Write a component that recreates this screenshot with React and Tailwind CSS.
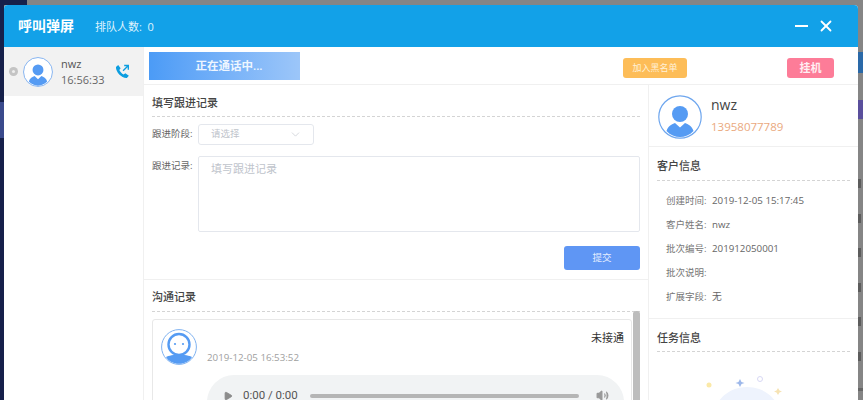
import { Play, Volume2, X, ChevronDown } from 'lucide-react';

const FONT = { fontFamily: '"Open Sans", "Noto Sans CJK SC", sans-serif' };

const customerRows = [
  ['创建时间:', '2019-12-05 15:17:45'],
  ['客户姓名:', 'nwz'],
  ['批次编号:', '201912050001'],
  ['批次说明:', ''],
  ['扩展字段:', '无'],
];

// 用户头像
function UserAvatar({ className }) {
  return (
    <svg viewBox="0 0 44 44" className={className}>
      <circle cx="22" cy="22" r="21.2" fill="#fff" stroke="#6ea6ee" strokeWidth="1.2" />
      <circle cx="22" cy="19" r="8" fill="#559bf3" />
      <path d="M8.5 36 C10 31 14 29 17 28 L22 32.5 L27 28 C30 29 34 31 35.5 36 C28 44 16 44 8.5 36 Z" fill="#559bf3" />
    </svg>
  );
}

// 机器人头像
function RobotAvatar({ className }) {
  return (
    <svg viewBox="0 0 36 36" className={className}>
      <circle cx="18" cy="18" r="17.4" fill="#fff" stroke="#7fb2f0" strokeWidth="1" />
      <path d="M5 28 C10 25 26 25 31 28 C26 37 10 37 5 28 Z" fill="#559bf3" />
      <circle cx="18" cy="15.5" r="10.5" fill="#fff" stroke="#559bf3" strokeWidth="2.4" />
      <circle cx="14" cy="15" r="1.1" fill="#559bf3" />
      <circle cx="22" cy="15" r="1.1" fill="#559bf3" />
    </svg>
  );
}

// 通话图标
function CallIcon() {
  return (
    <svg viewBox="0 0 16 16" className="ml-[7px] h-[15px] w-[15px]">
      <path
        d="M1 3.2 L3.4 1 L6 4.6 L4.6 6.4 C5.4 8.2 7.2 10.2 9.2 11.2 L11 9.8 L14.8 12.4 L12.6 15 C7.2 15.4 0.8 8.6 1 3.2 Z"
        fill="#0d9ee0"
      />
      <path d="M8.6 7.2 L14 1.8 M9.8 1.6 L14.2 1.6 L14.2 6" fill="none" stroke="#0d9ee0" strokeWidth="1.4" />
    </svg>
  );
}

function SectionTitle({ children, className = '' }) {
  return (
    <div className={`border-b border-dashed border-[#d4d4d4] text-[11px] font-medium leading-[16px] text-[#444] ${className}`}>
      {children}
    </div>
  );
}

export default function App() {
  return (
    <div className="relative flex h-[400px] w-[863px] overflow-hidden bg-[#858585]" style={FONT}>
      {/* 背景左上角 */}
      <div className="absolute left-0 top-0 h-[5px] w-[27px] bg-[#16204a]" />

      {/* 左侧背景 */}
      <div className="h-full w-[4px] bg-[#16204a]">
        <div className="h-[102px]" />
        <div className="h-[36px] bg-[#3a4a8c]" />
      </div>

      {/* 弹窗 */}
      <div className="relative mt-[5px] flex h-[395px] w-[854px] flex-col overflow-hidden rounded-t-[4px] bg-white">
        <header className="flex h-[42px] shrink-0 items-center bg-[#12a1e8] pl-[14px] pr-[23px] text-white">
          <span className="text-[14px] font-bold leading-none">呼叫弹屏</span>
          <span className="ml-[21px] text-[11px] leading-none text-[#dff2fd]">排队人数:&nbsp;&nbsp;0</span>
          <div className="ml-auto h-[2px] w-[13px] bg-white" />
          <X size={18} strokeWidth={2.4} className="ml-[9px]" />
        </header>

        <div className="flex min-h-0 flex-1">
          {/* 通话列表 */}
          <aside className="w-[140px] shrink-0 border-r border-[#f0f0f0]">
            <div className="flex h-[49px] items-center bg-[#f2f2f2] pl-[5px]">
              <span className="flex h-[9px] w-[9px] items-center justify-center rounded-full bg-[#c4c4c4]">
                <span className="h-[3px] w-[3px] rounded-full bg-[#eee]" />
              </span>
              <UserAvatar className="ml-[5px] h-[30px] w-[30px]" />
              <div className="ml-[8px] w-[47px] text-[11px] leading-[16px] text-[#666]">
                <div className="text-[#555]">nwz</div>
                <div>16:56:33</div>
              </div>
              <CallIcon />
            </div>
          </aside>

          <div className="flex min-w-0 flex-1 flex-col">
            {/* 操作栏 */}
            <div className="flex h-[38px] shrink-0 items-start border-b border-[#f0f0f0] pl-[5px] pt-[5px]">
              <div className="flex h-[28px] w-[151px] shrink-0 items-center justify-center bg-gradient-to-r from-[#4b9bf6] to-[#9cc6f9] pl-[9px] text-[11.5px] font-semibold text-[#eef6ff]">
                正在通话中...
              </div>
              <div className="ml-[323px] mt-[6px] flex h-[20px] w-[64px] shrink-0 items-center justify-center rounded-[3px] bg-[#fdbd58] text-[9px] text-[#fff1d8]">
                加入黑名单
              </div>
              <div className="ml-[100px] mt-[6px] flex h-[20px] w-[47px] shrink-0 items-center justify-center rounded-[3px] bg-[#fd7c98] text-[11px] font-semibold text-[#ffeef2]">
                挂机
              </div>
            </div>

            <div className="flex min-h-0 flex-1">
              {/* 中间内容 */}
              <main className="flex w-[504px] shrink-0 flex-col">
                <div className="shrink-0 border-b border-[#f0f0f0] px-[8px] pb-[9px]">
                  <SectionTitle className="pb-[5px] pt-[10px]">填写跟进记录</SectionTitle>
                  <div className="mt-[7px] flex items-center">
                    <span className="w-[46px] text-[9.5px] text-[#666]">跟进阶段:</span>
                    <div className="flex h-[21px] w-[116px] items-center justify-between rounded-[3px] border border-[#e4e7ed] pl-[12px] pr-[11px] text-[9.5px] text-[#c0c4cc]">
                      请选择
                      <ChevronDown size={13} strokeWidth={1.2} />
                    </div>
                  </div>
                  <div className="mt-[11px] flex items-start">
                    <span className="w-[46px] pt-[3px] text-[9.5px] text-[#666]">跟进记录:</span>
                    <div className="h-[76px] flex-1 rounded-[2px] border border-[#e4e7ed] pl-[12px] pt-[4px] text-[11px] text-[#c0c4cc]">
                      填写跟进记录
                    </div>
                  </div>
                  <div className="mt-[14px] flex justify-end">
                    <div className="flex h-[24px] w-[76px] items-center justify-center rounded-[3px] bg-[#5f96f4] text-[9.5px] text-[#e4eeff]">
                      提交
                    </div>
                  </div>
                </div>

                <div className="relative min-h-0 flex-1 overflow-hidden px-[8px]">
                  <SectionTitle className="pb-[6px] pt-[9px]">沟通记录</SectionTitle>
                  {/* 滚动条 */}
                  <div className="absolute right-[8px] top-[31px] h-[120px] w-[7px] rounded-t-[3px] bg-[#bdbdbd]" />
                  <div className="mr-[8px] mt-[7px] rounded-[3px] border border-[#e8e8e8] pl-[8px] pr-[7px] pt-[9px]">
                    <div className="flex items-end">
                      <RobotAvatar className="h-[36px] w-[36px]" />
                      <span className="ml-[10px] text-[9.75px] leading-[14px] text-[#a0a0a0]">2019-12-05 16:53:52</span>
                      <span className="mb-[20px] ml-auto text-[11px] leading-[14px] text-[#333]">未接通</span>
                    </div>
                    <div className="ml-[46px] mt-[10px] flex h-[54px] items-start rounded-[27px] bg-[#f1f3f4] pl-[16px] pr-[14px] pt-[11px] text-[#555]">
                      <Play size={10} fill="#8c8c8c" stroke="#8c8c8c" className="mt-[5px]" />
                      <span className="ml-[10px] mt-[4px] text-[11.5px] leading-[10px]" style={{ fontFamily: 'Roboto, sans-serif' }}>0:00 / 0:00</span>
                      <div className="ml-[12px] mt-[8px] h-[4px] w-[269px] rounded-full bg-[#b5b5b5]" />
                      <Volume2 size={13} fill="#999" stroke="#999" className="ml-[17px] mt-[3px]" />
                    </div>
                  </div>
                </div>
              </main>

              {/* 客户信息 */}
              <section className="min-w-0 flex-1 border-l border-[#f0f0f0]">
                <div className="flex h-[62px] border-b border-[#f0f0f0] pl-[9px] pt-[10px]">
                  <UserAvatar className="h-[44px] w-[44px]" />
                  <div className="ml-[9px]">
                    <div className="text-[14px] leading-[20px] text-[#444]">nwz</div>
                    <div className="mt-[3px] text-[11.5px] leading-[18px] text-[#eaa97e]">13958077789</div>
                  </div>
                </div>
                <div className="h-[172px] border-b border-[#f0f0f0] px-[8px]">
                  <SectionTitle className="pb-[6px] pt-[11px]">客户信息</SectionTitle>
                  <div className="pl-[9px] pt-[8px]">
                    {customerRows.map(([label, value]) => (
                      <div key={label} className="flex h-[24px] items-center text-[9.5px] text-[#777]">
                        <span className="w-[46px] shrink-0">{label}</span>
                        <span className="text-[9.75px] text-[#666]">{value}</span>
                      </div>
                    ))}
                  </div>
                </div>
                <div className="px-[8px]">
                  <SectionTitle className="pb-[5px] pt-[11px]">任务信息</SectionTitle>
                  <svg viewBox="0 0 193 50" className="h-[50px] w-[193px]">
                    <circle cx="52" cy="33" r="2.5" fill="#fbe9a8" />
                    <path d="M83 27 l1.5 3 l3 1 l-3 1 l-1.5 3 l-1.5 -3 l-3 -1 l3 -1 Z" fill="#9db8ea" />
                    <circle cx="103" cy="27" r="2.5" fill="none" stroke="#d8d8f4" strokeWidth="1" />
                    <path d="M121 36 l1.5 2.5 l2.5 1 l-2.5 1 l-1.5 2.5 l-1.5 -2.5 l-2.5 -1 l2.5 -1 Z" fill="#f6e3b4" />
                    <ellipse cx="90" cy="62" rx="32" ry="27" fill="#eef3fd" />
                  </svg>
                </div>
              </section>
            </div>
          </div>
        </div>
      </div>

      {/* 右侧背景 */}
      <div className="min-w-0 flex-1 overflow-hidden">
        <div className="mt-[52px] h-[21px] bg-[#2a69a8]" />
        <div className="mt-[27px] h-[19px] bg-[#5a4f9c]" />
        <div className="mt-[58px]">
          {[0, 1, 2, 3, 4, 5].map((i) => (
            <div key={i} className="h-[34.5px] pt-[2px]">
              <div className="h-[9px] w-[3px] bg-[#5c5c5c]" />
            </div>
          ))}
        </div>
        <div className="mt-[4px] h-[3px] bg-[#666]" />
      </div>
    </div>
  );
}
